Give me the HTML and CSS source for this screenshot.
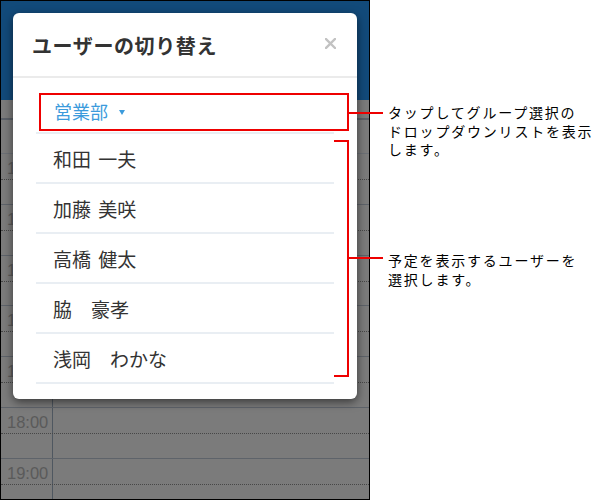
FILE: index.html
```html
<!DOCTYPE html>
<html lang="ja">
<head>
<meta charset="utf-8">
<title>ユーザーの切り替え</title>
<link rel="stylesheet" href="styles.css">
</head>
<body>
<div class="stage">
  <div class="phone">
    <div class="appbar"></div>
    <div class="allday"></div>
    <div class="cal">
      <div class="row partial"><div class="time"></div><div class="slot"></div></div>
      <div class="row"><div class="time">13:00</div><div class="slot"></div></div>
      <div class="row"><div class="time">14:00</div><div class="slot"></div></div>
      <div class="row"><div class="time">15:00</div><div class="slot"></div></div>
      <div class="row"><div class="time">16:00</div><div class="slot"></div></div>
      <div class="row"><div class="time">17:00</div><div class="slot"></div></div>
      <div class="row"><div class="time">18:00</div><div class="slot"></div></div>
      <div class="row"><div class="time">19:00</div><div class="slot"></div></div>
    </div>

    <div class="modal">
      <div class="modal-head">
        <h2 class="modal-title">ユーザーの切り替え</h2>
        <span class="close">
          <svg width="11" height="11" viewBox="0 0 11 11"><path d="M1 1L10 10M10 1L1 10" stroke="#c2c2c2" stroke-width="2.4" stroke-linecap="square"/></svg>
        </span>
      </div>
      <div class="group">営業部<span class="caret"></span></div>
      <ul class="users">
        <li>和田 一夫</li>
        <li>加藤 美咲</li>
        <li>高橋 健太</li>
        <li>脇　豪孝</li>
        <li>浅岡　わかな</li>
      </ul>
    </div>
  </div>

  <div class="mark box"></div>
  <div class="mark line line-1"></div>
  <div class="mark bracket"></div>
  <div class="mark line line-2"></div>

  <div class="callout callout-1">
    <span class="cl">タップしてグループ選択の</span>
    <span class="cl">ドロップダウンリストを表示</span>
    <span class="cl">します。</span>
  </div>
  <div class="callout callout-2">
    <span class="cl">予定を表示するユーザーを</span>
    <span class="cl">選択します。</span>
  </div>
</div>
</body>
</html>
```

FILE: styles.css
```css
* { box-sizing: border-box; }

html, body {
  margin: 0;
  padding: 0;
  background: #fff;
}

body {
  font-family: "Noto Sans CJK JP", "Liberation Sans", sans-serif;
}

.stage {
  position: relative;
  width: 600px;
  height: 500px;
  overflow: hidden;
}

/* ---------- phone screenshot ---------- */
.phone {
  position: relative;
  width: 370px;
  height: 500px;
  border: 1px solid #000;
  background: #7b7b7b;
  overflow: hidden;
}

.appbar {
  height: 99px;
  background: #124a7a;
}

.allday {
  height: 20px;
  border-bottom: 2px solid #5b6068;
}

.cal {
  display: flex;
  flex-direction: column;
}

.row {
  position: relative;
  display: flex;
  height: 50.8px;
  border-bottom: 1px solid #5e636a;
}

.row::after {
  content: "";
  position: absolute;
  left: 0;
  right: 0;
  top: 25px;
  border-top: 1px dotted #474747;
}

.row.partial {
  height: 34px;
  border-bottom-color: #6c7076;
}

.row.partial::after {
  display: none;
}

.time {
  width: 52px;
  flex: none;
  border-right: 1px solid #4f5760;
  padding: 4px 0 0 6px;
  font-family: "Liberation Sans", Arial, sans-serif;
  font-size: 16.5px;
  line-height: 20px;
  color: #5a5a5a;
}

.slot {
  flex: 1;
}

/* ---------- modal ---------- */
.modal {
  position: absolute;
  left: 12px;
  top: 12px;
  width: 344px;
  height: 386px;
  background: #fff;
  border-radius: 6px;
  box-shadow: 0 3px 10px rgba(0, 0, 0, 0.55);
}

.modal-head {
  display: flex;
  align-items: center;
  justify-content: space-between;
  height: 65px;
  padding: 1px 21px 0 19px;
  border-bottom: 2px solid #ebebeb;
}

.modal-title {
  margin: 0;
  font-size: 20px;
  font-weight: 700;
  color: #333;
  letter-spacing: 0.6px;
}

.close {
  display: flex;
  margin-top: -3px;
}

.group {
  display: flex;
  align-items: center;
  height: 54px;
  padding: 11px 0 0 41px;
  font-size: 18px;
  color: #3c9bdc;
}

.caret {
  width: 0;
  height: 0;
  margin: 3px 0 0 11px;
  border-left: 3.5px solid transparent;
  border-right: 3.5px solid transparent;
  border-top: 5px solid #3c9bdc;
}

.users {
  list-style: none;
  margin: 0 23px;
  padding: 0;
  border-top: 2px solid #e9eef3;
}

.users li {
  height: 50px;
  padding: 2px 0 0 17px;
  line-height: 46px;
  font-size: 19px;
  word-spacing: 3px;
  color: #333;
  border-bottom: 2px solid #e9eef3;
}

/* ---------- annotations ---------- */
.mark {
  position: absolute;
  border-color: #ee0000;
}

.box {
  left: 39px;
  top: 93px;
  width: 310px;
  height: 38px;
  border: 2px solid #ee0000;
}

.line {
  height: 2px;
  width: 35px;
  left: 348px;
  background: #ee0000;
}

.line-1 { top: 112px; }
.line-2 { top: 257px; }

.bracket {
  left: 334px;
  top: 140px;
  width: 15px;
  height: 237px;
  border: 2px solid #ee0000;
  border-left: 0;
}

.callout {
  position: absolute;
  left: 388px;
  display: flex;
  flex-direction: column;
  white-space: nowrap;
  font-size: 14px;
  letter-spacing: 1.8px;
  color: #000;
}

.cl {
  display: block;
  height: 18.6px;
  line-height: 18.6px;
}

.callout-1 { top: 103px; }
.callout-2 { top: 251px; }
```
